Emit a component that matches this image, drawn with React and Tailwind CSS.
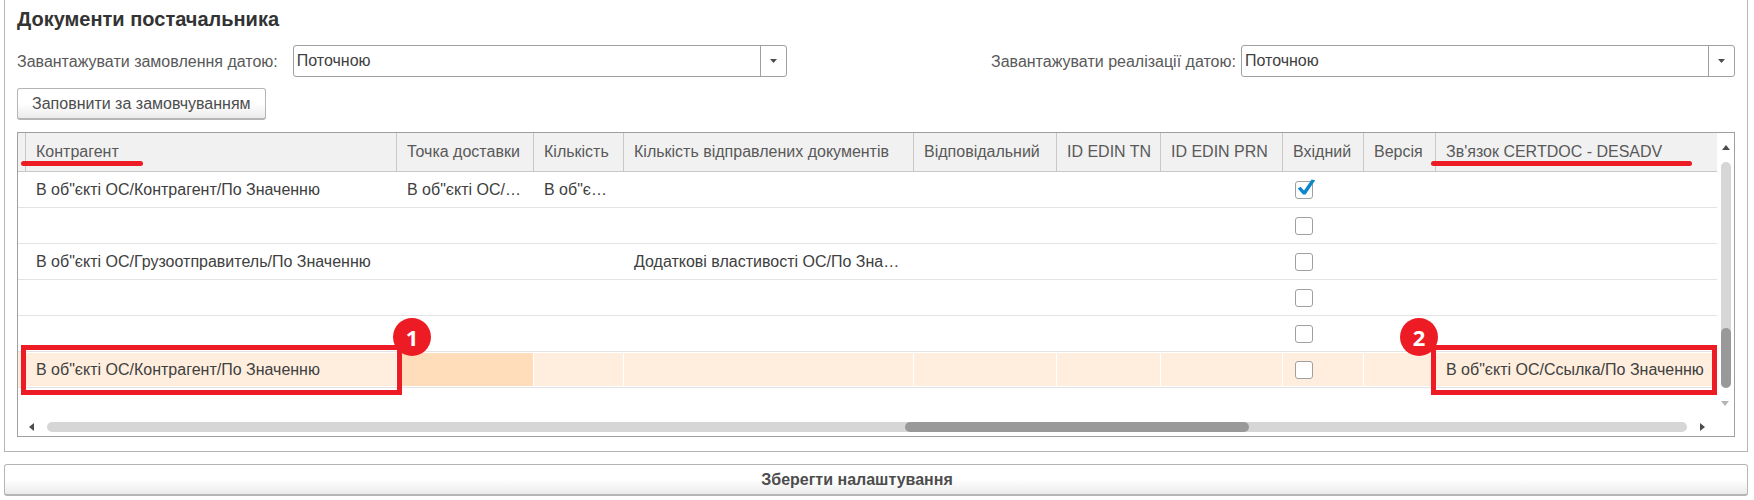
import React, { useState } from 'react'

const COLUMNS = [
  { key: 'counterparty', title: 'Контрагент', width: 'w-[371px]', mark: true },
  { key: 'point', title: 'Точка доставки', width: 'w-[137px]' },
  { key: 'count', title: 'Кількість', width: 'w-[90px]' },
  { key: 'sent', title: 'Кількість відправлених документів', width: 'w-[290px]' },
  { key: 'responsible', title: 'Відповідальний', width: 'w-[143px]' },
  { key: 'tn', title: 'ID EDIN TN', width: 'w-[104px]' },
  { key: 'prn', title: 'ID EDIN PRN', width: 'w-[122px]' },
  { key: 'incoming', title: 'Вхідний', width: 'w-[81px]' },
  { key: 'version', title: 'Версія', width: 'w-[72px]' },
  { key: 'link', title: "Зв'язок CERTDOC - DESADV", width: 'w-auto', mark: true },
]

const ROWS = [
  {
    counterparty: 'В об"єкті ОС/Контрагент/По Значенню',
    point: 'В об"єкті ОС/…',
    count: 'В об"є…',
    incoming: true,
  },
  {},
  {
    counterparty: 'В об"єкті ОС/Грузоотправитель/По Значенню',
    sent: 'Додаткові властивості ОС/По Зна…',
  },
  {},
  {},
  {
    counterparty: 'В об"єкті ОС/Контрагент/По Значенню',
    link: 'В об"єкті ОС/Ссылка/По Значенню',
    selected: true,
  },
]

const DateSelect = ({ id, label, gap }) => (
  <div className={`flex items-center ${gap}`}>
    <label htmlFor={id} className="whitespace-nowrap pt-0.5 text-[#595959]">{label}</label>
    <div className="relative flex-1">
      <select
        id={id}
        className="block h-8 w-full appearance-none rounded-[3px] border border-[#a0a0a0] bg-white pl-[3px] pr-8 text-[#404040]"
      >
        <option>Поточною</option>
      </select>
      <span className="pointer-events-none absolute inset-y-px right-px flex w-[26px] items-center justify-center border-l border-[#a0a0a0]">
        <svg width="7" height="4" viewBox="0 0 7 4"><path d="M0 0h7L3.5 4z" fill="#4d4d4d" /></svg>
      </span>
    </div>
  </div>
)

const IncomingBox = ({ defaultChecked, label }) => (
  <span className="relative block h-[18px] w-[18px]">
    <input
      type="checkbox"
      aria-label={label}
      defaultChecked={defaultChecked}
      className="peer block h-[18px] w-[18px] appearance-none rounded-[3px] border border-[#a0a0a0] bg-white"
    />
    <svg
      width="18"
      height="18"
      viewBox="0 0 18 18"
      className="pointer-events-none absolute inset-0 hidden overflow-visible peer-checked:block"
    >
      <path d="M2.8 7.6L5.6 5.8L9 9.6L16.6-1.4L20.2-.8L10.6 13.6H8z" fill="#0d86ca" />
    </svg>
  </span>
)

// Red frame with a numbered badge on one of its top corners
const Callout = ({ number, frame, badge }) => (
  <>
    <span className={`pointer-events-none absolute -top-[7px] -bottom-2 z-10 border-[5px] border-[#ed1c24] ${frame}`} />
    <span
      className={`absolute -top-[34px] z-20 flex h-[38px] w-[38px] items-center justify-center rounded-full bg-[#ed1c24] font-['Open_Sans',sans-serif] text-[22px] font-bold text-white ${badge}`}
    >
      {number}
    </span>
  </>
)

const App = () => {
  const [selected, setSelected] = useState(ROWS.findIndex((row) => row.selected))

  return (
    <main className="bg-white px-1 pb-1 pr-[6px] font-['Liberation_Sans',Arial,sans-serif] text-base leading-5">
      <section className="border border-t-0 border-[#b5b5b5] px-3 pb-[14px] pt-[7px]">
        <h1 className="text-xl leading-6 font-bold text-[#333]">Документи постачальника</h1>

        <div className="mt-[14px] grid grid-cols-[770fr_744fr] gap-x-[204px]">
          <DateSelect id="order-date" label="Завантажувати замовлення датою:" gap="gap-[15px]" />
          <DateSelect id="sale-date" label="Завантажувати реалізації датою:" gap="gap-[5px]" />
        </div>

        <button
          type="button"
          className="mt-[11px] block h-8 rounded-[3px] border border-b-2 border-[#b5b5b5] bg-linear-to-b from-white from-50% to-[#ebebeb] px-[14px] text-[#4d4d4d]"
        >
          Заповнити за замовчуванням
        </button>

        {/* Table with its own scrollbars */}
        <div className="mt-3 border border-[#a0a0a0]">
          <div className="flex">
            <div className="min-w-0 flex-1">
              <table className="w-full table-fixed border-separate border-spacing-0 text-left">
                <thead>
                  <tr className="h-[39px] bg-[#f1f1f1] text-[#595959]">
                    <td className="w-2 border-b border-r border-[#c8c8c8]" />
                    {COLUMNS.map((col) => (
                      <th
                        key={col.key}
                        className={`relative whitespace-nowrap border-b border-r border-[#c8c8c8] p-0 pl-[10px] font-normal last:border-r-0 ${col.width}`}
                      >
                        {col.title}
                        {col.mark && (
                          <span
                            className={`absolute -left-[5px] bottom-[5px] h-[5px] rounded-sm bg-[#ed1c24] ${
                              col.key === 'link' ? 'w-[261px]' : 'w-[122px]'
                            }`}
                          />
                        )}
                      </th>
                    ))}
                  </tr>
                </thead>
                <tbody>
                  {ROWS.map((row, index) => (
                    <tr key={index} onClick={() => setSelected(index)} className="h-9 text-[#404040]">
                      <td className={`border-b border-[#e3e3e3] p-0 ${index === selected ? 'bg-[#ffeedd]' : ''}`} />
                      {COLUMNS.map((col) => (
                        <td
                          key={col.key}
                          className={`relative border-b border-[#e3e3e3] p-0 py-px ${col.key === 'link' ? '' : 'pr-px'}`}
                        >
                          <div
                            className={`flex h-[33px] items-center ${col.key === 'incoming' ? 'pl-3' : 'pl-[10px] pr-2'} ${
                              index !== selected ? '' : col.key === 'point' ? 'bg-[#ffdcba]' : 'bg-[#ffeedd]'
                            }`}
                          >
                            {col.key === 'incoming' ? (
                              <IncomingBox defaultChecked={row.incoming} label={`Вхідний, рядок ${index + 1}`} />
                            ) : (
                              <span className="whitespace-nowrap">{row[col.key]}</span>
                            )}
                          </div>
                          {row.selected && col.key === 'counterparty' && (
                            <Callout number={1} frame="-left-[5px] -right-[5px]" badge="-right-[34px]" />
                          )}
                          {row.selected && col.key === 'link' && (
                            <Callout number={2} frame="-left-[5px] right-0" badge="-left-9" />
                          )}
                        </td>
                      ))}
                    </tr>
                  ))}
                </tbody>
              </table>
            </div>

            <div className="flex w-[17px] flex-col items-center pt-3">
              <svg width="8" height="5" viewBox="0 0 8 5"><path d="M0 5h8L4 0z" fill="#4d4d4d" /></svg>
              <div className="mt-3 flex w-[10px] flex-1 flex-col justify-end rounded-full bg-[#d6d6d6]">
                <div className="h-[60px] rounded-full bg-[#999]" />
              </div>
            </div>
          </div>

          <div className="flex justify-end pr-[5px] pt-[13px]">
            <svg width="8" height="5" viewBox="0 0 8 5"><path d="M0 0h8L4 5z" fill="#b5b5b5" /></svg>
          </div>
          <div className="flex items-center pb-1 pl-[11px] pr-[29px] pt-4">
            <svg width="5" height="8" viewBox="0 0 5 8"><path d="M5 0v8L0 4z" fill="#4d4d4d" /></svg>
            <div className="mx-[13px] flex h-[10px] flex-1 rounded-full bg-[#d6d6d6]">
              <div className="ml-[52.3%] w-[21%] rounded-full bg-[#999]" />
            </div>
            <svg width="5" height="8" viewBox="0 0 5 8"><path d="M0 0v8L5 4z" fill="#4d4d4d" /></svg>
          </div>
        </div>
      </section>

      <button
        type="button"
        className="mt-3 block h-8 w-full rounded-[3px] border border-b-2 border-[#b5b5b5] bg-linear-to-b from-white from-50% to-[#ebebeb] pr-[38px] font-bold text-[#4d4d4d]"
      >
        Зберегти налаштування
      </button>
    </main>
  )
}

export default App
